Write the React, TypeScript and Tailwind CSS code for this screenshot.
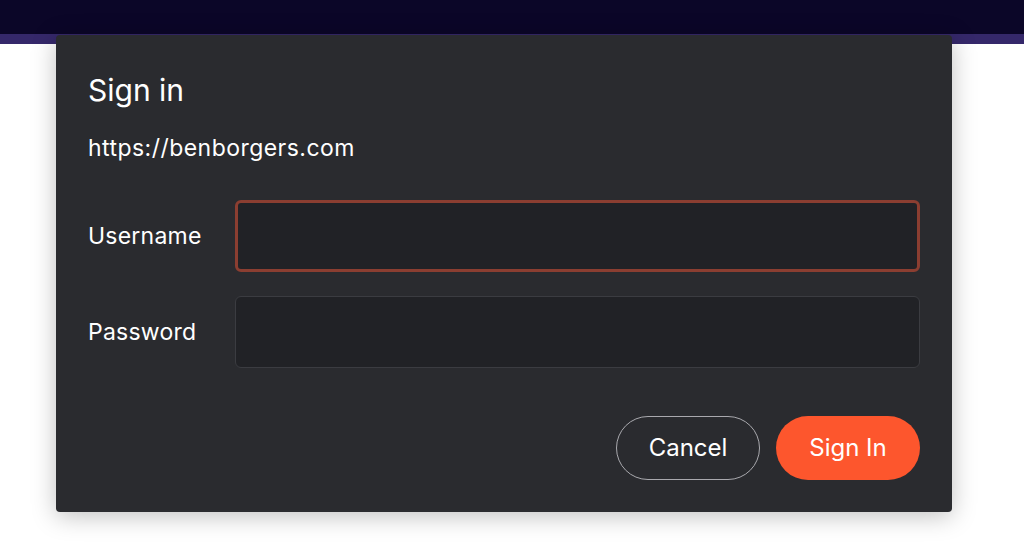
const App = () => {
  return (
    <div className="relative h-[552px] w-[1024px] overflow-hidden bg-white font-['Inter',sans-serif]">
      <div className="h-[34px] bg-[#0b0628]" />
      <div className="h-[10px] bg-[#35286a]" />

      <div className="absolute left-[56px] top-[35px] w-[896px] rounded-[4px] bg-[#2a2b2f] px-8 pb-8 pt-[37px] text-white shadow-[0_4px_24px_rgba(0,0,0,0.25)]">
        <h1 className="text-[30px] leading-[36px] font-normal">Sign in</h1>
        <p className="mt-[26px] text-[23px] leading-[28px] tracking-[0.02em]">https://benborgers.com</p>

        <div className="mt-[38px] grid grid-cols-[147px_1fr] items-center gap-y-6">
          <label className="text-[23px] tracking-[0.01em]">Username</label>
          <input
            type="text"
            className="h-[72px] rounded-md border-[3px] border-[#8b3e31] bg-[#212226] px-4 text-[20px] outline-none"
          />
          <label className="text-[23px] tracking-[0.01em]">Password</label>
          <input
            type="password"
            className="h-[72px] rounded-md border border-[#3b3c41] bg-[#212226] px-4 text-[20px] outline-none"
          />
        </div>

        <div className="mt-12 flex justify-end gap-4">
          <button className="h-16 w-[144px] rounded-full border border-[#a9a9ae] text-[24px]">
            Cancel
          </button>
          <button className="h-16 w-[144px] rounded-full bg-[#fd562d] text-[24px]">
            Sign In
          </button>
        </div>
      </div>
    </div>
  );
};

export default App;
